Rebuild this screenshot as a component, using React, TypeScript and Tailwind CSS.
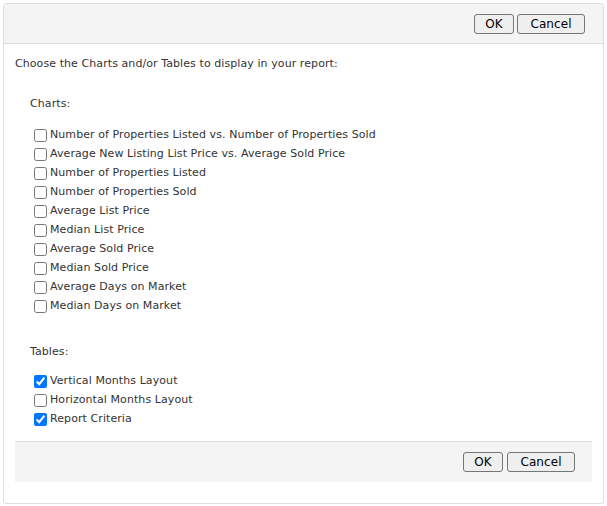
const charts = [
  "Number of Properties Listed vs. Number of Properties Sold",
  "Average New Listing List Price vs. Average Sold Price",
  "Number of Properties Listed",
  "Number of Properties Sold",
  "Average List Price",
  "Median List Price",
  "Average Sold Price",
  "Median Sold Price",
  "Average Days on Market",
  "Median Days on Market",
]

const tables = [
  { label: "Vertical Months Layout", checked: true },
  { label: "Horizontal Months Layout", checked: false },
  { label: "Report Criteria", checked: true },
]

function Btn({ children, className }: { children: React.ReactNode; className?: string }) {
  return (
    <button
      className={
        "h-[20px] rounded-[3px] border border-[#767676] bg-[#efefef] text-[12px] leading-none text-black " +
        (className ?? "")
      }
    >
      {children}
    </button>
  )
}

function Check({ label, checked = false }: { label: string; checked?: boolean }) {
  return (
    <label className="flex h-[19px] items-center">
      <input type="checkbox" defaultChecked={checked} className="ml-[4px] mr-[3px] h-[13px] w-[13px]" />
      <span>{label}</span>
    </label>
  )
}

export default function App() {
  return (
    <div className="h-[506px] w-[607px] bg-white p-[3px] font-['DejaVu_Sans',sans-serif] text-[11px] tracking-[0.08px] text-[#333]">
      <div className="flex h-[501px] flex-col rounded-[3px] border border-[#ddd]">
        {/* Header */}
        <div className="flex h-[40px] items-center justify-end gap-[3px] border-b border-[#ddd] bg-[#f4f4f4] pr-[18px]">
          <Btn className="w-[40px]">OK</Btn>
          <Btn className="w-[68px]">Cancel</Btn>
        </div>

        <div className="px-[11px] pt-[12px]">
          <p className="h-[16px] leading-[16px]">Choose the Charts and/or Tables to display in your report:</p>

          <div className="pl-[15px] pt-[24px]">
            <p className="leading-[16px]">Charts:</p>
            <div className="pt-[14px]">
              {charts.map((c) => (
                <Check key={c} label={c} />
              ))}
            </div>

            <p className="pt-[28px] leading-[16px]">Tables:</p>
            <div className="pt-[12px]">
              {tables.map((t) => (
                <Check key={t.label} label={t.label} checked={t.checked} />
              ))}
            </div>
          </div>

          {/* Footer */}
          <div className="mt-[12px] flex h-[41px] items-center justify-end gap-[4px] border-t border-[#ddd] bg-[#f4f4f4] pr-[17px]">
            <Btn className="w-[40px]">OK</Btn>
            <Btn className="w-[68px]">Cancel</Btn>
          </div>
        </div>
      </div>
    </div>
  )
}
